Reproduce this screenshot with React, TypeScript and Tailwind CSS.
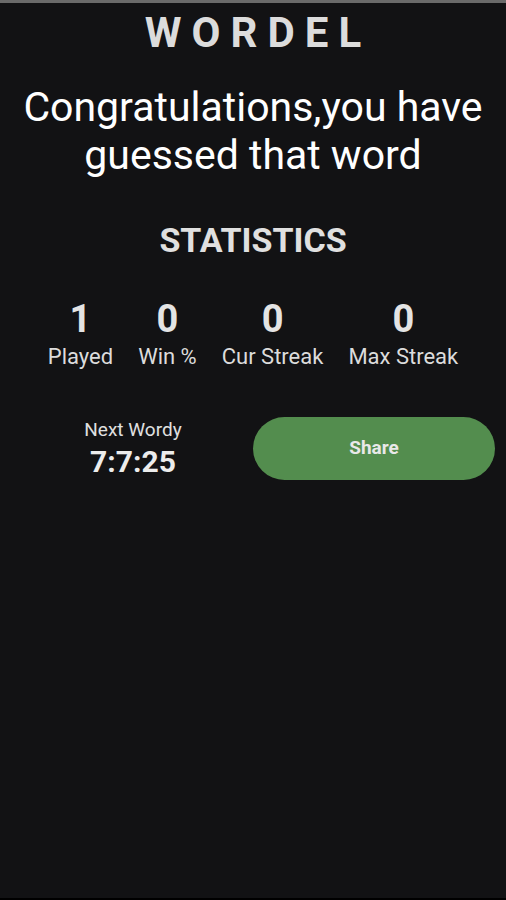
import React from "react";

const stats = [
  { v: "1", l: "Played" },
  { v: "0", l: "Win %" },
  { v: "0", l: "Cur Streak" },
  { v: "0", l: "Max Streak" },
];

export default function App() {
  return (
    <div
      className="w-[506px] h-[900px] bg-[#121214] flex flex-col text-[#e4e4e4] overflow-hidden"
      style={{ fontFamily: "Roboto, 'Noto Sans', sans-serif" }}
    >
      <div className="h-[3px] bg-[#6a6a6a] shrink-0" />
      <div className="flex-1 flex flex-col items-center">
        <div className="mt-[8px] pl-[10px] text-[42px] leading-[44px] font-bold tracking-[10px] text-[#dcdcdc]">
          WORDEL
        </div>
        <div className="mt-[28px] text-center text-[41px] leading-[48px] text-white whitespace-nowrap">
          Congratulations,you have
          <br />
          guessed that word
        </div>
        <div className="mt-[41px] text-[34px] leading-[40px] font-bold text-[#e0e0e0]">
          STATISTICS
        </div>
        <div className="mt-[37px] flex gap-[25px] justify-center">
          {stats.map((s) => (
            <div key={s.l} className="flex flex-col items-center">
              <div className="text-[38px] leading-[44px] font-bold text-[#e4e4e4]">{s.v}</div>
              <div className="text-[22px] leading-[26px] text-[#dcdcdc] mt-[3px]">{s.l}</div>
            </div>
          ))}
        </div>
        <div className="mt-[47px] w-full flex items-center">
          <div className="w-[266px] flex flex-col items-center">
            <div className="text-[19px] leading-[24px] text-[#e0e0e0]">Next Wordy</div>
            <div className="mt-[2px] text-[30px] leading-[36px] font-bold text-[#ececec]">7:7:25</div>
          </div>
          <button className="ml-[-13px] w-[242px] h-[63px] rounded-full bg-[#538d4e] text-[19px] font-bold text-[#e8e8e8] flex items-center justify-center">
            Share
          </button>
        </div>
      </div>
      <div className="h-[2px] bg-black shrink-0" />
    </div>
  );
}
